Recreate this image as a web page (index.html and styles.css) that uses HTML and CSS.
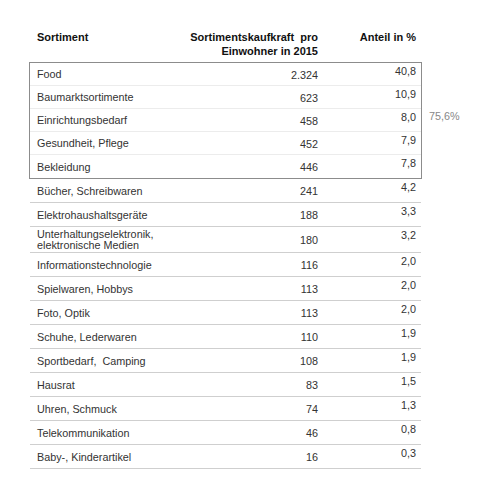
FILE: index.html
```html
<!DOCTYPE html>
<html lang="de">
<head>
<meta charset="utf-8">
<title>Sortimentskaufkraft</title>
<link rel="stylesheet" href="styles.css">
</head>
<body>
<div class="page">
  <div class="table">
    <div class="head">
      <div class="h1">Sortiment</div>
      <div class="h2">Sortimentskaufkraft&nbsp; pro<br>Einwohner in 2015</div>
      <div class="h3">Anteil in %</div>
    </div>
    <div class="group">
      <div class="box">
        <div class="row in"><div class="c1">Food</div><div class="c2">2.324</div><div class="c3">40,8</div></div>
        <div class="row in"><div class="c1">Baumarktsortimente</div><div class="c2">623</div><div class="c3">10,9</div></div>
        <div class="row in"><div class="c1">Einrichtungsbedarf</div><div class="c2">458</div><div class="c3">8,0</div></div>
        <div class="row in"><div class="c1">Gesundheit, Pflege</div><div class="c2">452</div><div class="c3">7,9</div></div>
        <div class="row in last"><div class="c1">Bekleidung</div><div class="c2">446</div><div class="c3">7,8</div></div>
      </div>
      <div class="sum">75,6%</div>
    </div>
    <div class="row out"><div class="c1">Bücher, Schreibwaren</div><div class="c2">241</div><div class="c3">4,2</div></div>
    <div class="row out"><div class="c1">Elektrohaushaltsgeräte</div><div class="c2">188</div><div class="c3">3,3</div></div>
    <div class="row out two"><div class="c1">Unterhaltungselektronik,<br>elektronische Medien</div><div class="c2">180</div><div class="c3">3,2</div></div>
    <div class="row out"><div class="c1">Informationstechnologie</div><div class="c2">116</div><div class="c3">2,0</div></div>
    <div class="row out"><div class="c1">Spielwaren, Hobbys</div><div class="c2">113</div><div class="c3">2,0</div></div>
    <div class="row out"><div class="c1">Foto, Optik</div><div class="c2">113</div><div class="c3">2,0</div></div>
    <div class="row out"><div class="c1">Schuhe, Lederwaren</div><div class="c2">110</div><div class="c3">1,9</div></div>
    <div class="row out"><div class="c1">Sportbedarf,&nbsp; Camping</div><div class="c2">108</div><div class="c3">1,9</div></div>
    <div class="row out"><div class="c1">Hausrat</div><div class="c2">83</div><div class="c3">1,5</div></div>
    <div class="row out"><div class="c1">Uhren, Schmuck</div><div class="c2">74</div><div class="c3">1,3</div></div>
    <div class="row out"><div class="c1">Telekommunikation</div><div class="c2">46</div><div class="c3">0,8</div></div>
    <div class="row out"><div class="c1">Baby-, Kinderartikel</div><div class="c2">16</div><div class="c3">0,3</div></div>
  </div>
</div>
</body>
</html>
```

FILE: styles.css
```css
html, body {
  margin: 0;
  padding: 0;
  background: #fff;
}
body {
  font-family: "Liberation Sans", Arial, sans-serif;
  font-size: 10.8px;
  color: #333;
}
.page {
  padding: 30px 0 0 29px;
}
.table {
  width: 393px;
}
.head {
  display: grid;
  grid-template-columns: 150px 143px 98px;
  margin: 0 1px;
  height: 32px;
  font-size: 11px;
  font-weight: bold;
  color: #111;
  line-height: 14px;
}
.h1 {
  padding-left: 7px;
}
.h2, .h3 {
  text-align: right;
  padding-right: 5px;
  white-space: nowrap;
}
.group {
  display: flex;
  align-items: flex-start;
  width: 393px;
}
.box {
  border: 1px solid #8c8c8c;
  width: 391px;
  flex: none;
}
.sum {
  flex: none;
  margin-left: 7px;
  padding-top: 48px;
  color: #888;
  line-height: 12px;
  white-space: nowrap;
}
.row {
  display: grid;
  grid-template-columns: 193px 100px 98px;
  box-sizing: border-box;
  line-height: 12px;
}
.row.in {
  height: 23px;
  border-bottom: 1px solid #ececec;
}
.row.in.last {
  border-bottom: none;
}
.row.out {
  margin: 0 1px;
  height: 24px;
  border-bottom: 1px solid #cfcfcf;
}
.row.out.two {
  height: 26px;
}
.two .c1 {
  line-height: 11px;
}
.c1 {
  align-self: center;
  padding-left: 7px;
}
.c2 {
  align-self: center;
  text-align: right;
  padding-right: 5px;
  padding-top: 1px;
}
.c3 {
  align-self: start;
  text-align: right;
  padding-right: 5px;
  padding-top: 2px;
}
```
